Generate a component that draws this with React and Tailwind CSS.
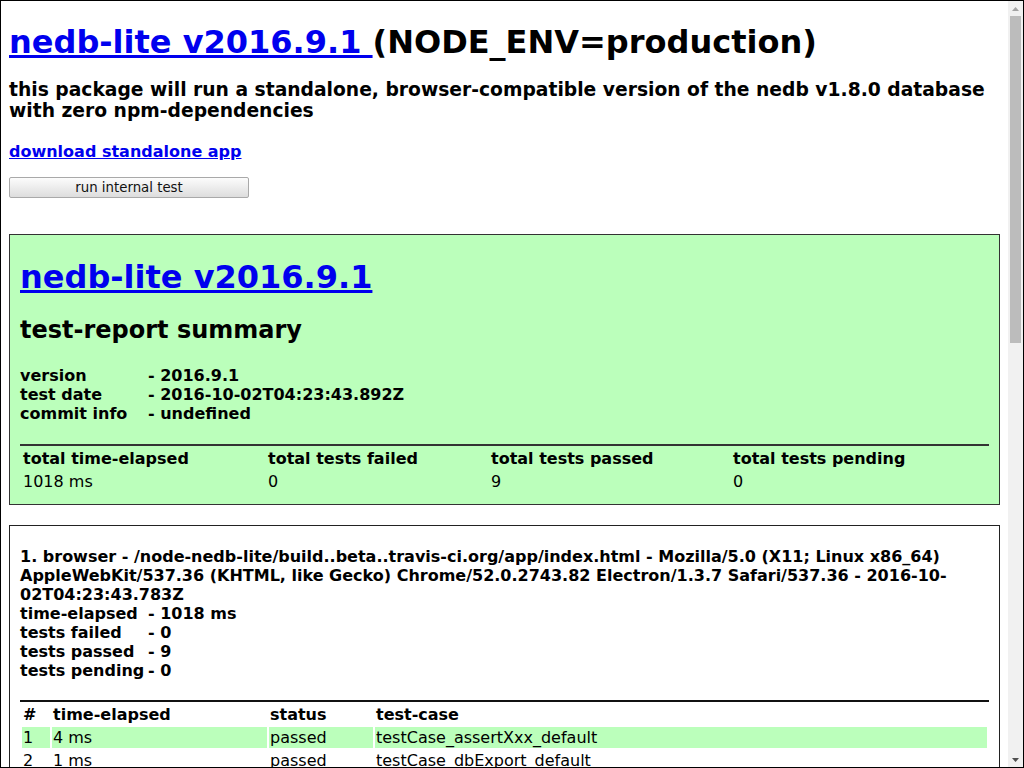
import React from "react";

function InfoRow({ label, value }) {
  return (
    <div className="flex h-[19px] leading-[19px]">
      <div className="w-[128px] shrink-0">{label}</div>
      <div>- {value}</div>
    </div>
  );
}

export default function App() {
  const font = "font-['DejaVu_Sans',sans-serif]";
  return (
    <div className={`w-[1024px] h-[768px] border border-black flex overflow-hidden bg-white text-black ${font}`}>
      {/* page content */}
      <div className="flex-1 min-w-0 overflow-hidden px-2 pt-[22px]">
        <h1 className="text-[32px] leading-[38px] font-bold whitespace-nowrap">
          <a href="#" className="text-[#0000ee] underline">{"nedb-lite v2016.9.1 "}</a>
          (NODE_ENV=production)
        </h1>
        <h3 className="mt-[18px] text-[18.72px] leading-[21px] font-bold">
          this package will run a standalone, browser-compatible version of the nedb v1.8.0 database with zero npm-dependencies
        </h3>
        <div className="mt-[21px] text-[16px] leading-[19px] font-bold">
          <a href="#" className="text-[#0000ee] underline">download standalone app</a>
        </div>
        <button className="mt-[16px] block w-[240px] h-[21px] border border-[#a9a9a9] rounded-[2px] bg-linear-to-b from-[#fcfcfc] to-[#dddddd] text-[13.33px] leading-[15px] text-[#111]">
          run internal test
        </button>

        {/* summary box */}
        <div className="mt-[36px] border border-[#333] bg-[#bbffbb] px-[10px] pb-[10px]">
          <h1 className="mt-[23px] text-[32px] leading-[38px] font-bold">
            <a href="#" className="text-[#0000ee] underline">nedb-lite v2016.9.1</a>
          </h1>
          <h2 className="mt-[20px] text-[24px] leading-[28px] font-bold">test-report summary</h2>
          <div className="mt-[22px] text-[16px] font-bold">
            <InfoRow label="version" value="2016.9.1" />
            <InfoRow label="test date" value="2016-10-02T04:23:43.892Z" />
            <InfoRow label="commit info" value="undefined" />
          </div>
          <table className="mt-[21px] w-full table-fixed border-separate border-spacing-[2px] border-t-2 border-[#333] text-[16px] leading-[19px]">
            <thead>
              <tr>
                <th className="w-[243px] p-px text-left font-bold">total time-elapsed</th>
                <th className="w-[221px] p-px text-left font-bold">total tests failed</th>
                <th className="w-[240px] p-px text-left font-bold">total tests passed</th>
                <th className="p-px text-left font-bold">total tests pending</th>
              </tr>
            </thead>
            <tbody>
              <tr>
                <td className="p-px">1018 ms</td>
                <td className="p-px">0</td>
                <td className="p-px">9</td>
                <td className="p-px">0</td>
              </tr>
            </tbody>
          </table>
        </div>

        {/* browser box */}
        <div className="mt-[20px] border border-[#222] bg-white px-[10px] pt-[21px] pb-[10px]">
          <div className="text-[16px] leading-[19px] font-bold">
            <div>
              1. browser - /node-nedb-lite/build..beta..travis-ci.org/app/index.html - Mozilla/5.0 (X11; Linux x86_64) AppleWebKit/537.36 (KHTML, like Gecko) Chrome/52.0.2743.82 Electron/1.3.7 Safari/537.36 - 2016-10-02T04:23:43.783Z
            </div>
            <InfoRow label="time-elapsed" value="1018 ms" />
            <InfoRow label="tests failed" value="0" />
            <InfoRow label="tests passed" value="9" />
            <InfoRow label="tests pending" value="0" />
          </div>
          <table className="mt-[20px] w-full table-fixed border-separate border-spacing-[2px] border-t-2 border-[#111] text-[16px] leading-[19px]">
            <thead>
              <tr>
                <th className="w-[28px] p-px text-left font-bold">#</th>
                <th className="w-[215px] p-px text-left font-bold">time-elapsed</th>
                <th className="w-[104px] p-px text-left font-bold">status</th>
                <th className="p-px text-left font-bold">test-case</th>
              </tr>
            </thead>
            <tbody>
              <tr>
                <td className="p-px bg-[#bbffbb]">1</td>
                <td className="p-px bg-[#bbffbb]">4 ms</td>
                <td className="p-px bg-[#bbffbb]">passed</td>
                <td className="p-px bg-[#bbffbb]">testCase_assertXxx_default</td>
              </tr>
              <tr>
                <td className="p-px">2</td>
                <td className="p-px">1 ms</td>
                <td className="p-px">passed</td>
                <td className="p-px">testCase_dbExport_default</td>
              </tr>
              <tr>
                <td className="p-px bg-[#bbffbb]">3</td>
                <td className="p-px bg-[#bbffbb]">1 ms</td>
                <td className="p-px bg-[#bbffbb]">passed</td>
                <td className="p-px bg-[#bbffbb]">testCase_dbImport_default</td>
              </tr>
            </tbody>
          </table>
        </div>
      </div>

      {/* scrollbar */}
      <div className="w-[15px] shrink-0 bg-[#f1f1f1] flex flex-col items-center">
        <div className="h-[15px] w-full flex items-center justify-center">
          <svg width="7" height="4" viewBox="0 0 7 4">
            <polygon points="0,4 7,4 3.5,0" fill="#a3a3a3" />
          </svg>
        </div>
        <div className="w-[11px] h-[327px] bg-[#bcbcbc]" />
        <div className="flex-1" />
        <div className="h-[15px] w-full flex items-center justify-center">
          <svg width="7" height="4" viewBox="0 0 7 4">
            <polygon points="0,0 7,0 3.5,4" fill="#505050" />
          </svg>
        </div>
      </div>
    </div>
  );
}
